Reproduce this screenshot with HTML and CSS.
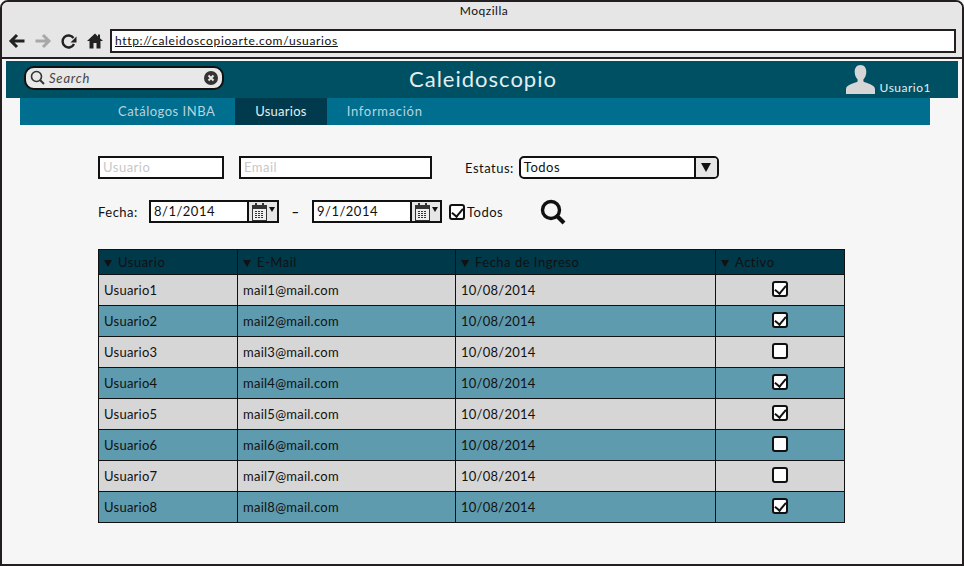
FILE: index.html
```html
<!DOCTYPE html>
<html lang="es">
<head>
    <meta charset="UTF-8">
    <meta name="viewport" content="width=device-width, initial-scale=1.0">
    <title>Moqzilla</title>
    <link rel="stylesheet" href="styles.css">
</head>
<body>
    <div class="window">
        <div class="chrome">
            <div class="chrome-title">Moqzilla</div>
            <div class="toolbar">
                <svg class="tool" width="18" height="18" viewBox="0 0 18 18"><path d="M16.5 9H3M9 3L3 9l6 6" fill="none" stroke="#222" stroke-width="3"/></svg>
                <svg class="tool" width="18" height="18" viewBox="0 0 18 18"><path d="M1.500 9H15M9 3l6 6-6 6" fill="none" stroke="#a8a8a8" stroke-width="3"/></svg>
                <svg class="tool" width="18" height="18" viewBox="0 0 18 18"><path d="M14 12a6 6 0 1 1-.5-6" fill="none" stroke="#222" stroke-width="2.400"/><path d="M16.500 4.500v6h-6z" fill="#222"/></svg>
                <svg class="tool" width="18" height="18" viewBox="0 0 18 18"><path d="M9 1.500L1 9h2.500v7.500H7.500V11h3v5.500h4V9H17l-3-2.800V2.500h-2v1.900z" fill="#222"/></svg>
                <div class="url"><span>http://caleidoscopioarte.com/usuarios</span></div>
            </div>
        </div>

        <header class="site-header">
            <div class="search">
                <svg width="15" height="15" viewBox="0 0 15 15"><circle cx="6.500" cy="6.500" r="5" fill="none" stroke="#333" stroke-width="1.600"/><path d="M10 10l4 4" stroke="#333" stroke-width="2"/></svg>
                <span class="search-text">Search</span>
                <svg class="search-clear" width="14" height="14" viewBox="0 0 14 14"><circle cx="7" cy="7" r="7" fill="#333"/><path d="M4.500 4.500l5 5M9.500 4.500l-5 5" stroke="#e8e8e8" stroke-width="2"/></svg>
            </div>
            <div class="site-title">Caleidoscopio</div>
            <div class="user">
                <svg width="29" height="29" viewBox="0 0 30 30"><path d="M15 0c4 0 6 3 6 7 0 3-1 6-3 8v2c3 2 12 3 12 8v5H0v-5c0-5 9-6 12-8v-2c-2-2-3-5-3-8 0-4 2-7 6-7z" fill="#d6d6d6"/></svg>
                <span>Usuario1</span>
            </div>
        </header>
        <nav class="site-nav">
            <a class="nav-item">Catálogos INBA</a>
            <a class="nav-item active">Usuarios</a>
            <a class="nav-item wide">Información</a>
        </nav>

        <main class="content">
            <div class="filter-row">
                <div class="field user-field placeholder">Usuario</div>
                <div class="field email-field placeholder">Email</div>
                <label class="status-label">Estatus:</label>
                <div class="select">
                    <span>Todos</span>
                    <div class="select-btn"><i class="arrow"></i></div>
                </div>
            </div>
            <div class="filter-row second">
                <label class="date-label">Fecha:</label>
                <div class="date">
                    <span class="date-value">8/1/2014</span>
                    <div class="date-btn">
                        <svg width="15" height="18" viewBox="0 0 15 18"><rect x=".5" y="2.500" width="14" height="15" fill="#eee" stroke="#333"/><rect x="1" y="3" width="13" height="3" fill="#333"/><path d="M4 0v4M11 0v4" stroke="#333" stroke-width="2"/><path d="M3 8.500h9M3 10.500h9M3 12.500h9M3 14.500h9" stroke="#333" stroke-dasharray="2 1"/></svg>
                        <i class="arrow tiny"></i>
                    </div>
                </div>
                <span class="dash">–</span>
                <div class="date">
                    <span class="date-value">9/1/2014</span>
                    <div class="date-btn">
                        <svg width="15" height="18" viewBox="0 0 15 18"><rect x=".5" y="2.500" width="14" height="15" fill="#eee" stroke="#333"/><rect x="1" y="3" width="13" height="3" fill="#333"/><path d="M4 0v4M11 0v4" stroke="#333" stroke-width="2"/><path d="M3 8.500h9M3 10.500h9M3 12.500h9M3 14.500h9" stroke="#333" stroke-dasharray="2 1"/></svg>
                        <i class="arrow tiny"></i>
                    </div>
                </div>
                <span class="check on todos-check"></span>
                <span class="todos-label">Todos</span>
                <svg class="go" width="26" height="26" viewBox="0 0 26 26"><circle cx="11" cy="11" r="8.500" fill="none" stroke="#111" stroke-width="3.400"/><path d="M17 17l7 7" stroke="#111" stroke-width="4"/></svg>
            </div>

            <table class="users">
                <thead>
                    <tr>
                        <th class="col-user"><i class="arrow small"></i>Usuario</th>
                        <th class="col-mail"><i class="arrow small"></i>E-Mail</th>
                        <th class="col-date"><i class="arrow small"></i>Fecha de Ingreso</th>
                        <th class="col-active"><i class="arrow small"></i>Activo</th>
                    </tr>
                </thead>
                <tbody>
                    <tr><td>Usuario1</td><td>mail1@mail.com</td><td>10/08/2014</td><td class="center"><span class="check on"></span></td></tr>
                    <tr class="alt"><td>Usuario2</td><td>mail2@mail.com</td><td>10/08/2014</td><td class="center"><span class="check on"></span></td></tr>
                    <tr><td>Usuario3</td><td>mail3@mail.com</td><td>10/08/2014</td><td class="center"><span class="check"></span></td></tr>
                    <tr class="alt"><td>Usuario4</td><td>mail4@mail.com</td><td>10/08/2014</td><td class="center"><span class="check on"></span></td></tr>
                    <tr><td>Usuario5</td><td>mail5@mail.com</td><td>10/08/2014</td><td class="center"><span class="check on"></span></td></tr>
                    <tr class="alt"><td>Usuario6</td><td>mail6@mail.com</td><td>10/08/2014</td><td class="center"><span class="check"></span></td></tr>
                    <tr><td>Usuario7</td><td>mail7@mail.com</td><td>10/08/2014</td><td class="center"><span class="check"></span></td></tr>
                    <tr class="alt"><td>Usuario8</td><td>mail8@mail.com</td><td>10/08/2014</td><td class="center"><span class="check on"></span></td></tr>
                </tbody>
            </table>
        </main>
    </div>
</body>
</html>
```

FILE: styles.css
```css
* {
    box-sizing: border-box;
}

html, body {
    height: 100%;
}

body {
    margin: 0;
    background-color: #f6f6f6;
    color: #111;
    font-family: "Lato", "Noto Sans", sans-serif;
    font-size: 13px;
    letter-spacing: 0.5px;
    overflow: hidden;
}

.window {
    height: 566px;
    border: 2px solid #231f20;
    border-radius: 8px 8px 0 0;
    overflow: hidden;
}

.chrome {
    height: 57px;
    background-color: #e6e6e6;
    border-bottom: 2px solid #231f20;
}

.chrome-title {
    padding: 1px 0 0 4px;
    height: 27px;
    text-align: center;
    font-size: 12px;
    line-height: 16px;
}

.toolbar {
    display: flex;
    align-items: center;
    height: 24px;
    padding: 0 6px;
}

.tool {
    flex: none;
    margin-right: 8px;
}

.url {
    flex: 1;
    height: 24px;
    margin-left: -2px;
    background-color: #fff;
    border: 2px solid #231f20;
    padding-left: 3px;
    line-height: 19px;
    font-size: 12px;
    letter-spacing: 0.65px;
    text-decoration: underline;
}

.site-header {
    display: grid;
    grid-template-columns: 1fr 1fr 1fr;
    align-items: center;
    height: 37px;
    margin: 2px 4px 0 4px;
    padding: 0 18px;
    background-color: #005064;
}

.search {
    display: flex;
    align-items: center;
    width: 200px;
    height: 24px;
    padding: 0 4px;
    background-color: #e8e8e8;
    border: 2px solid #111;
    border-radius: 10px;
    margin-bottom: 4px;
}

.search-text {
    margin-left: 4px;
    font-style: italic;
    color: #444;
    letter-spacing: 0.8px;
}

.search-clear {
    margin-left: auto;
}

.site-title {
    text-align: center;
    color: #e4eef0;
    font-size: 22px;
    letter-spacing: 1px;
    margin: 0 0 2px 2px;
}

.user {
    display: flex;
    justify-content: flex-end;
    align-items: flex-end;
    padding-right: 9px;
    margin-bottom: 4px;
    color: #e4eef0;
    font-size: 12px;
    line-height: 13px;
    align-self: end;
}

.user span {
    margin-left: 5px;
}

.site-nav {
    display: flex;
    height: 27px;
    margin: 0 32px 0 18px;
    padding-left: 78px;
    background-color: #006e8f;
}

.nav-item {
    padding: 0 20px;
    line-height: 27px;
    color: #b7d4dd;
}

.nav-item.active {
    background-color: #003a4c;
    color: #e4eef0;
    letter-spacing: 0.25px;
}

.nav-item.wide {
    letter-spacing: 0.7px;
}

.content {
    padding: 31px 0 0 96px;
}

.filter-row {
    display: flex;
    align-items: center;
    height: 23px;
}

.filter-row.second {
    margin-top: 21px;
}

.field {
    height: 23px;
    background-color: #fff;
    border: 2px solid #111;
    padding-left: 3px;
    line-height: 19px;
}

.placeholder {
    color: #c8c8c8;
}

.user-field {
    width: 126px;
}

.email-field {
    width: 193px;
    margin-left: 15px;
}

.status-label {
    margin-left: 33px;
}

.select {
    display: flex;
    justify-content: space-between;
    width: 200px;
    height: 23px;
    margin-left: 5px;
    padding-left: 3px;
    background-color: #fff;
    border: 2px solid #111;
    border-radius: 5px;
    line-height: 19px;
    overflow: hidden;
}

.select-btn {
    display: flex;
    align-items: center;
    justify-content: center;
    width: 23px;
    background-color: #e6e6e6;
    border-left: 2px solid #111;
}

.arrow {
    display: inline-block;
    border-top: 9px solid #111;
    border-left: 5px solid transparent;
    border-right: 5px solid transparent;
}

.arrow.small {
    border-top-width: 7px;
    border-left-width: 4.5px;
    border-right-width: 4.5px;
}

.arrow.tiny {
    border-top-width: 5px;
    border-left-width: 3px;
    border-right-width: 3px;
    margin-bottom: 5px;
}

.date-label {
    width: 51px;
}

.date {
    display: flex;
    width: 130px;
    height: 23px;
    background-color: #fff;
    border: 2px solid #111;
    line-height: 19px;
}

.date-value {
    flex: 1;
    padding-left: 3px;
}

.date-btn {
    display: flex;
    align-items: center;
    justify-content: center;
    gap: 2px;
    width: 30px;
    background-color: #e6e6e6;
    border-left: 2px solid #111;
}

.dash {
    width: 33px;
    text-align: center;
    font-weight: bold;
}

.check {
    display: inline-block;
    position: relative;
    width: 16px;
    height: 16px;
    background-color: #fff;
    border: 2px solid #111;
    border-radius: 3px;
}

.check.on::after {
    content: "";
    position: absolute;
    left: 3px;
    top: 0;
    width: 5px;
    height: 9px;
    border: solid #111;
    border-width: 0 2.5px 2.5px 0;
    transform: rotate(40deg);
}

.todos-check {
    margin-left: 7px;
}

.todos-label {
    margin-left: 2px;
}

.go {
    margin-left: 37px;
}

.users {
    margin-top: 26px;
    width: 746px;
    table-layout: fixed;
    border-collapse: collapse;
    letter-spacing: 0.25px;
}

.users th, .users td {
    height: 31px;
    padding: 0 0 0 5px;
    border: 1px solid #111;
    text-align: left;
    font-weight: normal;
    background-color: #d6d6d6;
}

.users th {
    height: 25px;
    background-color: #00394a;
    color: #111;
    letter-spacing: 0.5px;
}

.users th .arrow {
    margin-right: 6px;
}

.users .alt td {
    background-color: #5f9bae;
}

.users td.center {
    padding: 0;
}

.users td.center .check {
    display: block;
    margin: 0 auto 2px auto;
}

.col-user {
    width: 139px;
}

.col-mail {
    width: 218px;
}

.col-date {
    width: 260px;
}

.col-active {
    width: 129px;
}
```
